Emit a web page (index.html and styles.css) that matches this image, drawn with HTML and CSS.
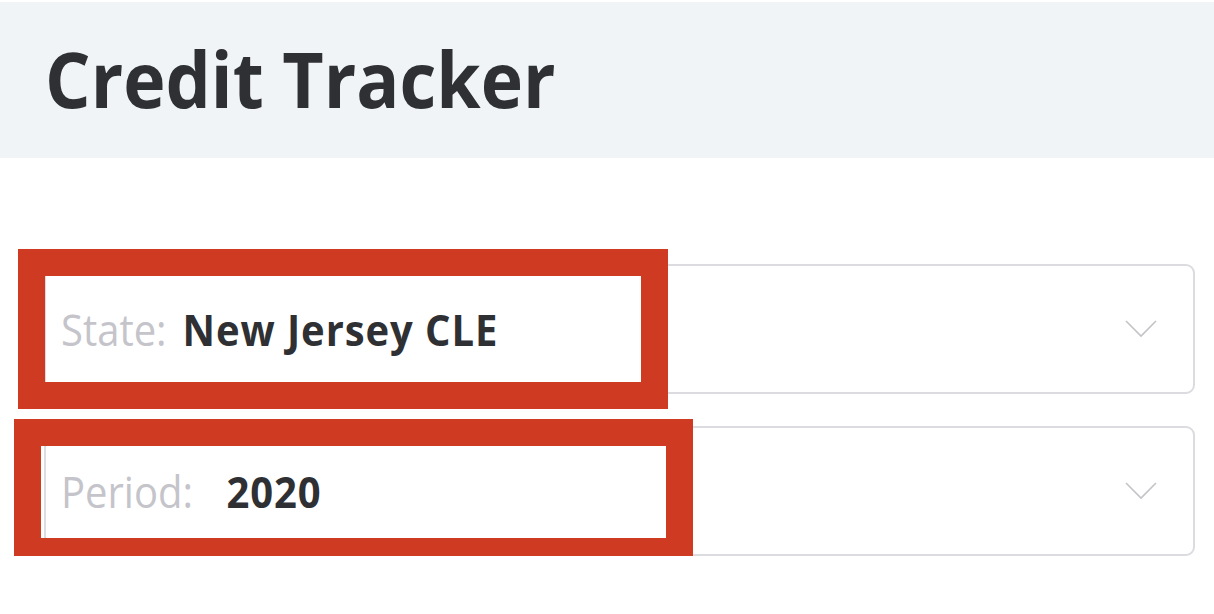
FILE: index.html
```html
<!DOCTYPE html>
<html>

<head>
  <title>Credit Tracker</title>
  <link rel="stylesheet" href="styles.css">
</head>

<body>
  <div id="page-header">
    <h1>Credit Tracker</h1>
  </div>

  <div id="filters">
    <div class="picker">
      <div class="picker-text">
        <span class="picker-label">State:</span>
        <span class="picker-value">New Jersey CLE</span>
      </div>
      <svg class="chevron" width="32" height="18" viewBox="0 0 32 18">
        <path d="M1 1 L16 16 L31 1" fill="none" stroke="#c3c3c8" stroke-width="1.6"/>
      </svg>
      <div class="mark mark-state"></div>
    </div>
    <div class="picker">
      <div class="picker-text">
        <span class="picker-label">Period:</span>
        <span class="picker-value picker-value-wide">2020</span>
      </div>
      <svg class="chevron" width="32" height="18" viewBox="0 0 32 18">
        <path d="M1 1 L16 16 L31 1" fill="none" stroke="#c3c3c8" stroke-width="1.6"/>
      </svg>
      <div class="mark mark-period"></div>
    </div>
  </div>
</body>

</html>
```

FILE: styles.css
```css
body {
  margin: 0;
  font-family: "Open Sans", "Noto Sans", sans-serif;
  background-color: #fff;
}

#page-header {
  margin-top: 2px;
  height: 156px;
  box-sizing: border-box;
  background-color: #f1f4f7;
  display: flex;
  align-items: center;
  padding-left: 45px;
  padding-bottom: 4px;
}

h1 {
  margin: 0;
  font-size: 77px;
  font-weight: 700;
  color: #2f3033;
  transform: scaleX(0.93);
  transform-origin: left center;
}

#filters {
  display: flex;
  flex-direction: column;
  gap: 32px;
  padding: 106px 19px 0 44px;
}

.picker {
  position: relative;
  height: 126px;
  border: 2px solid #dcdce0;
  border-radius: 9px;
  display: flex;
  align-items: center;
  padding-left: 15px;
  padding-right: 36px;
}

/* the reference text is slightly narrow, so squeeze it a bit */
.picker-text {
  display: flex;
  align-items: baseline;
  transform: scaleX(0.93);
  transform-origin: left center;
}

.picker-label {
  font-size: 43px;
  color: #c4c4ca;
  margin-right: 17px;
}

.picker-value {
  font-size: 43px;
  font-weight: 700;
  color: #2f3033;
  letter-spacing: 1px;
}

.picker-value-wide {
  margin-left: 19px;
}

.chevron {
  margin-left: auto;
}

/* red highlight boxes drawn over the pickers */
.mark {
  position: absolute;
  border: 27px solid #ce3a22;
  box-sizing: border-box;
}

.mark-state {
  left: -28px;
  top: -17px;
  width: 650px;
  height: 160px;
}

.mark-period {
  left: -32px;
  top: -9px;
  width: 679px;
  height: 146px;
}
```
